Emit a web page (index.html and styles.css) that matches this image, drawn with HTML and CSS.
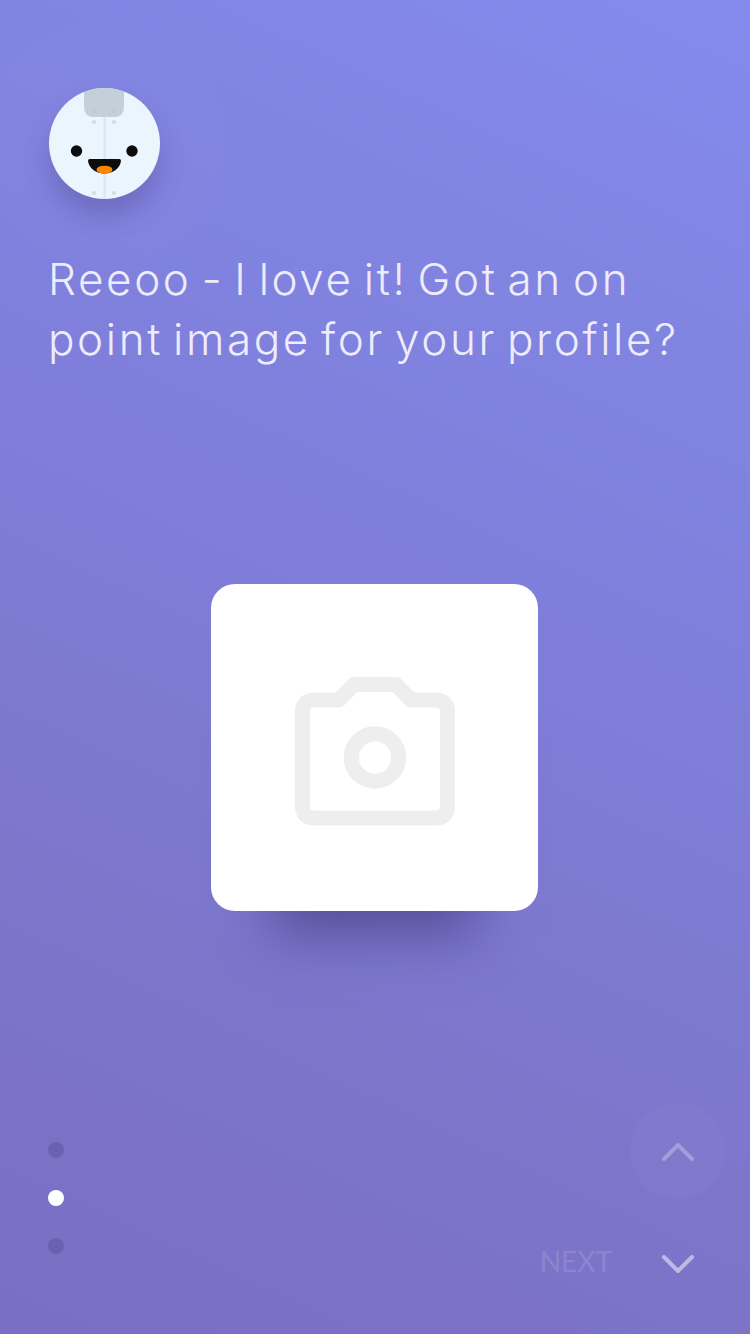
FILE: index.html
```html
<!DOCTYPE html>
<html lang="en">
<head>
<meta charset="utf-8">
<title>Profile image</title>
<link rel="stylesheet" href="styles.css">
</head>
<body>
<main class="screen">
  <section class="intro">
    <div class="avatar">
      <svg class="avatar-art" viewBox="0 0 111 111" width="111" height="111" aria-hidden="true">
        <path class="tab" d="M35 0H75V19Q75 29 65 29H45Q35 29 35 19Z"/>
        <rect class="seam" x="54.5" y="29" width="2" height="82"/>
        <g class="rivets">
          <circle cx="45" cy="23" r="2"/><circle cx="65" cy="23" r="2"/>
          <circle cx="45" cy="34" r="2"/><circle cx="65" cy="34" r="2"/>
          <circle cx="45" cy="105" r="2"/><circle cx="65" cy="105" r="2"/>
        </g>
        <circle class="face" cx="27.5" cy="63" r="5.7"/>
        <circle class="face" cx="83" cy="63" r="5.7"/>
        <path class="face" d="M41 71H70Q72.5 71 71.8 74C70.5 81 63 85.5 55.5 85.5C48 85.5 40.5 81 39.2 74Q38.5 71 41 71Z"/>
        <ellipse class="tongue" cx="55.5" cy="81.7" rx="8" ry="4"/>
      </svg>
    </div>
    <h1 class="title">Reeoo - I love it! Got an on<br>point image for your profile?</h1>
  </section>

  <section class="stage">
    <button class="card" type="button" aria-label="Add profile image">
      <svg class="camera" viewBox="0 0 160 149" width="160" height="149" aria-hidden="true">
        <path d="M20 23H44L59 7.5H101L116 23H140Q152.5 23 152.5 35V129Q152.5 141 140 141H20Q7.5 141 7.5 129V35Q7.5 23 20 23Z"/>
        <circle cx="80" cy="80.5" r="23.7"/>
      </svg>
    </button>
  </section>

  <footer class="footer">
    <div class="dots">
      <span class="dot"></span>
      <span class="dot dot-active"></span>
      <span class="dot"></span>
    </div>
    <nav class="nav">
      <button class="arrow arrow-up" type="button" aria-label="Previous">
        <svg viewBox="0 0 36 22" width="36" height="22" aria-hidden="true"><path d="M4 19L18 5L32 19"/></svg>
      </button>
      <div class="next-row">
        <span class="next">NEXT</span>
        <button class="arrow arrow-down" type="button" aria-label="Next">
          <svg viewBox="0 0 36 22" width="36" height="22" aria-hidden="true"><path d="M4 3L18 17L32 3"/></svg>
        </button>
      </div>
    </nav>
  </footer>
</main>
</body>
</html>
```
FILE: styles.css
```css
* { box-sizing: border-box; }

html, body {
  margin: 0;
  padding: 0;
}

body {
  width: 750px;
  height: 1334px;
  overflow: hidden;
}

.screen {
  width: 750px;
  height: 1334px;
  padding-top: 88px;
  overflow: hidden;
  display: flex;
  flex-direction: column;
  background: linear-gradient(205deg, #848bee 0%, #8185e2 20%, #7f80dc 38%, #7c74c8 78%, #7a6fc2 100%);
  font-family: Lato, "Open Sans", sans-serif;
}

.intro {
  padding-left: 49px;
}

.avatar {
  width: 111px;
  height: 111px;
  border-radius: 50%;
  background: #eaf5fe;
  box-shadow:
    0 16px 26px rgba(60, 52, 120, 0.3),
    0 0 0 8px rgba(255, 255, 255, 0.015),
    0 0 0 66px rgba(255, 255, 255, 0.015);
}

.avatar-art {
  display: block;
  border-radius: 50%;
}

.tab { fill: #c3d0da; }
.seam { fill: #d9e4ee; }
.rivets { fill: #b9c6d2; opacity: 0.55; }
.face { fill: #0c0c0c; }
.tongue { fill: #ff8400; }

.title {
  margin: 50px 0 0 -1px;
  font-family: Inter, "Open Sans", sans-serif;
  font-size: 44px;
  font-weight: 300;
  line-height: 60px;
  letter-spacing: 2.6px;
  word-spacing: -4.8px;
  color: #eeecfb;
  white-space: nowrap;
}

.stage {
  display: flex;
  justify-content: center;
  margin-top: 215px;
  padding-right: 1px;
}

.card {
  width: 327px;
  height: 327px;
  padding: 7px 0 0;
  border: 0;
  border-radius: 24px;
  background: #fff;
  display: flex;
  align-items: center;
  justify-content: center;
  box-shadow: 0 85px 50px -62px rgba(45, 38, 100, 0.5);
}

.camera {
  display: block;
  fill: none;
  stroke: #eeeeee;
  stroke-width: 15;
  stroke-linejoin: round;
}

.footer {
  display: flex;
  justify-content: space-between;
  align-items: flex-start;
  margin-top: 192px;
  padding: 0 24px 0 48px;
}

.dots {
  display: flex;
  flex-direction: column;
  gap: 32px;
  margin-top: 39px;
}

.dot {
  width: 16px;
  height: 16px;
  border-radius: 50%;
  background: rgba(70, 60, 130, 0.3);
}

.dot-active { background: #fff; }

.nav {
  display: flex;
  flex-direction: column;
  align-items: flex-end;
}

.arrow {
  flex: none;
  width: 96px;
  padding: 0;
  border: 0;
  background: none;
  display: flex;
  align-items: center;
  justify-content: center;
}

.arrow svg {
  display: block;
  fill: none;
  stroke: #fff;
  stroke-width: 4;
  stroke-linecap: round;
  stroke-linejoin: round;
}

.arrow-up {
  height: 96px;
  border-radius: 50%;
  background: rgba(255, 255, 255, 0.025);
}

.arrow-up svg { opacity: 0.28; }

.next-row {
  display: flex;
  align-items: center;
  gap: 18px;
  height: 68px;
  margin-top: 32px;
}

.arrow-down { height: 68px; }
.arrow-down svg { opacity: 0.5; }

.next {
  font-size: 28px;
  font-weight: 400;
  line-height: 32px;
  margin-bottom: 8px;
  color: rgba(255, 255, 255, 0.14);
}
```
